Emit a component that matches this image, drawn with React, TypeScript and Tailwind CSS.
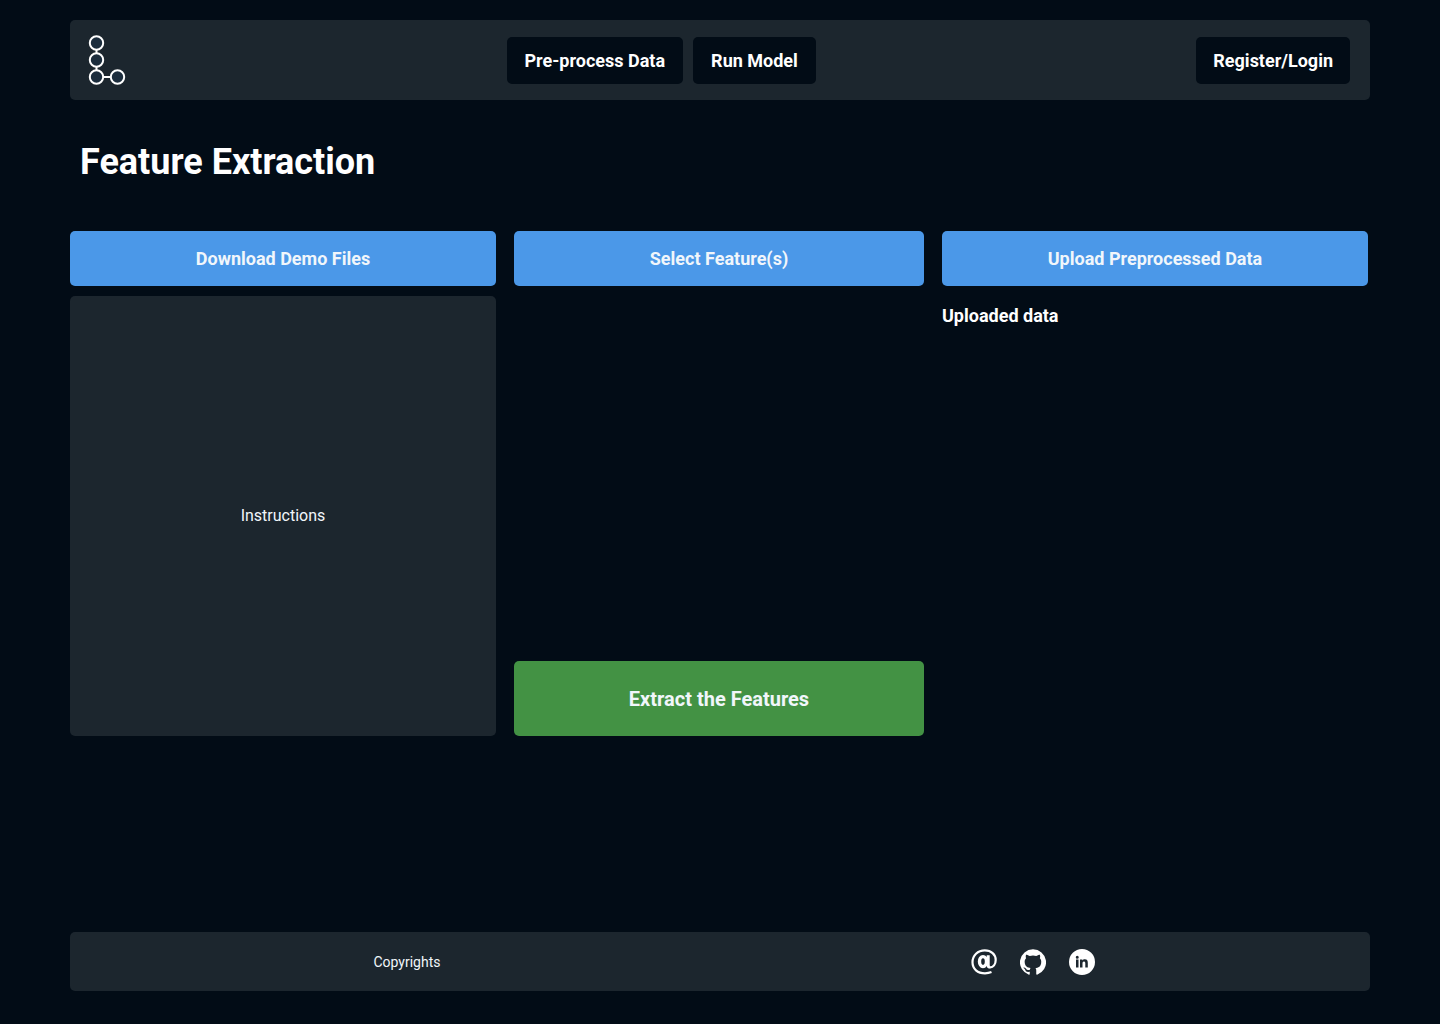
import React from "react";

const navButton =
  "h-[47px] rounded-[5px] bg-[#020c16] text-lg leading-[21px] font-bold text-white";
const columnButton =
  "h-[55px] w-full rounded-[5px] bg-[#4b98e8] text-lg font-bold text-[#f1f6fb]";

function Logo() {
  return (
    <svg width="38" height="50" viewBox="0 0 38 50" fill="#1c2d3d" stroke="#fff" strokeWidth="2" aria-hidden="true">
      <path d="M8.5 14.700v3.600M8.500 31.700v3.600M15.200 42h7.600" />
      <circle cx="8.5" cy="8" r="6.7" />
      <circle cx="8.5" cy="25" r="6.7" />
      <circle cx="8.5" cy="42" r="6.7" />
      <circle cx="29.5" cy="42" r="6.7" />
    </svg>
  );
}

function AtIcon() {
  return (
    <svg width="26" height="26" viewBox="0 0 26 26" fill="none" stroke="#fff" aria-hidden="true">
      <path d="M20.500 23.100C18.500 23.900 16.300 24.300 14 24.300 6.600 24.300 1.500 20 1.500 13.300 1.500 6.300 6.800 1.400 13.800 1.400c6.400 0 10.900 4 10.900 9.500 0 4.500-2.600 7.500-5.500 7.500-1.700 0-2.400-1-2.400-2.700" strokeWidth="2.200" />
      <ellipse cx="12" cy="12.600" rx="3.500" ry="5" strokeWidth="3.400" />
      <path d="M17.200 6.200V16c0 1.200.5 1.900 1.500 2" strokeWidth="3" />
    </svg>
  );
}

function GithubIcon() {
  return (
    <svg width="26" height="26" viewBox="0 0 24 24" fill="#fff" aria-hidden="true">
      <path d="M12 .3a12 12 0 0 0-3.8 23.4c.6.1.8-.3.8-.6v-2c-3.3.7-4-1.6-4-1.6-.6-1.4-1.4-1.8-1.4-1.8-1-.7.1-.7.1-.7 1.2 0 1.9 1.2 1.9 1.2 1 1.8 2.8 1.3 3.5 1 0-.8.4-1.3.7-1.6-2.7-.3-5.5-1.3-5.5-6 0-1.2.5-2.3 1.3-3.1-.2-.4-.6-1.6 0-3.2 0 0 1-.3 3.4 1.2a11.500 11.500 0 0 1 6 0c2.300-1.500 3.300-1.200 3.300-1.200.6 1.600.2 2.800 0 3.200.9.8 1.300 1.900 1.300 3.200 0 4.600-2.800 5.600-5.500 5.900.5.4.9 1 .9 2.200v3.300c0 .3.1.7.8.6A12 12 0 0 0 12 .3" />
    </svg>
  );
}

function LinkedinIcon() {
  return (
    <svg width="26" height="26" viewBox="0 0 26 26" fill="#fff" fillRule="evenodd" aria-hidden="true">
      <path d="M13 0a13 13 0 1 0 0 26 13 13 0 0 0 0-26M7 10.500h2.500v8H7zM8.250 6.700a1.500 1.500 0 1 1 0 3 1.500 1.500 0 0 1 0-3M11 10.500h2.400v1.100c.5-.8 1.300-1.300 2.400-1.300 2.500 0 3 1.600 3 3.800v4.400h-2.500v-3.900c0-1 0-2.200-1.300-2.200s-1.500 1-1.500 2.100v4H11z" />
    </svg>
  );
}

export default function App() {
  return (
    <div className="flex min-h-screen flex-col bg-[#020c16] px-[70px] pt-5 pb-[33px] font-[Roboto,sans-serif] text-white">
      <header className="flex h-20 items-center justify-between rounded-[5px] bg-[#1c262e] pr-5 pl-[18px]">
        <a href="#" aria-label="Home"><Logo /></a>
        <nav className="flex gap-[10px]">
          <button className={navButton + " px-[18px]"}>Pre-process Data</button>
          <button className={navButton + " px-[18px]"}>Run Model</button>
        </nav>
        <button className={navButton + " px-[17px]"}>Register/Login</button>
      </header>
      <main className="flex-1">
        <h1 className="mt-[41px] ml-[10px] text-4xl leading-[42px] font-bold">Feature Extraction</h1>
        <div className="mt-12 mr-[2px] grid grid-cols-[426fr_410fr_426fr] gap-[18px]">
          <section className="flex flex-col gap-[10px]">
            <button className={columnButton}>Download Demo Files</button>
            <div className="flex h-[440px] items-center justify-center rounded-[5px] bg-[#1c262e] text-base text-[#f1f6fb]">Instructions</div>
          </section>
          <section className="flex flex-col justify-between">
            <button className={columnButton}>Select Feature(s)</button>
            <button className="h-[75px] rounded-[5px] bg-[#439244] text-xl font-bold text-[#f1f6fb]">Extract the Features</button>
          </section>
          <section>
            <button className={columnButton}>Upload Preprocessed Data</button>
            <h2 className="mt-4 text-lg font-bold">Uploaded data</h2>
          </section>
        </div>
      </main>
      <footer className="grid h-[59px] grid-cols-2 items-center rounded-[5px] bg-[#1c262e] px-6">
        <p className="text-center text-sm text-[#f1f6fb]">Copyrights</p>
        <div className="flex justify-center gap-[23px]">
          <a href="#" aria-label="Email"><AtIcon /></a>
          <a href="#" aria-label="GitHub"><GithubIcon /></a>
          <a href="#" aria-label="LinkedIn"><LinkedinIcon /></a>
        </div>
      </footer>
    </div>
  );
}
